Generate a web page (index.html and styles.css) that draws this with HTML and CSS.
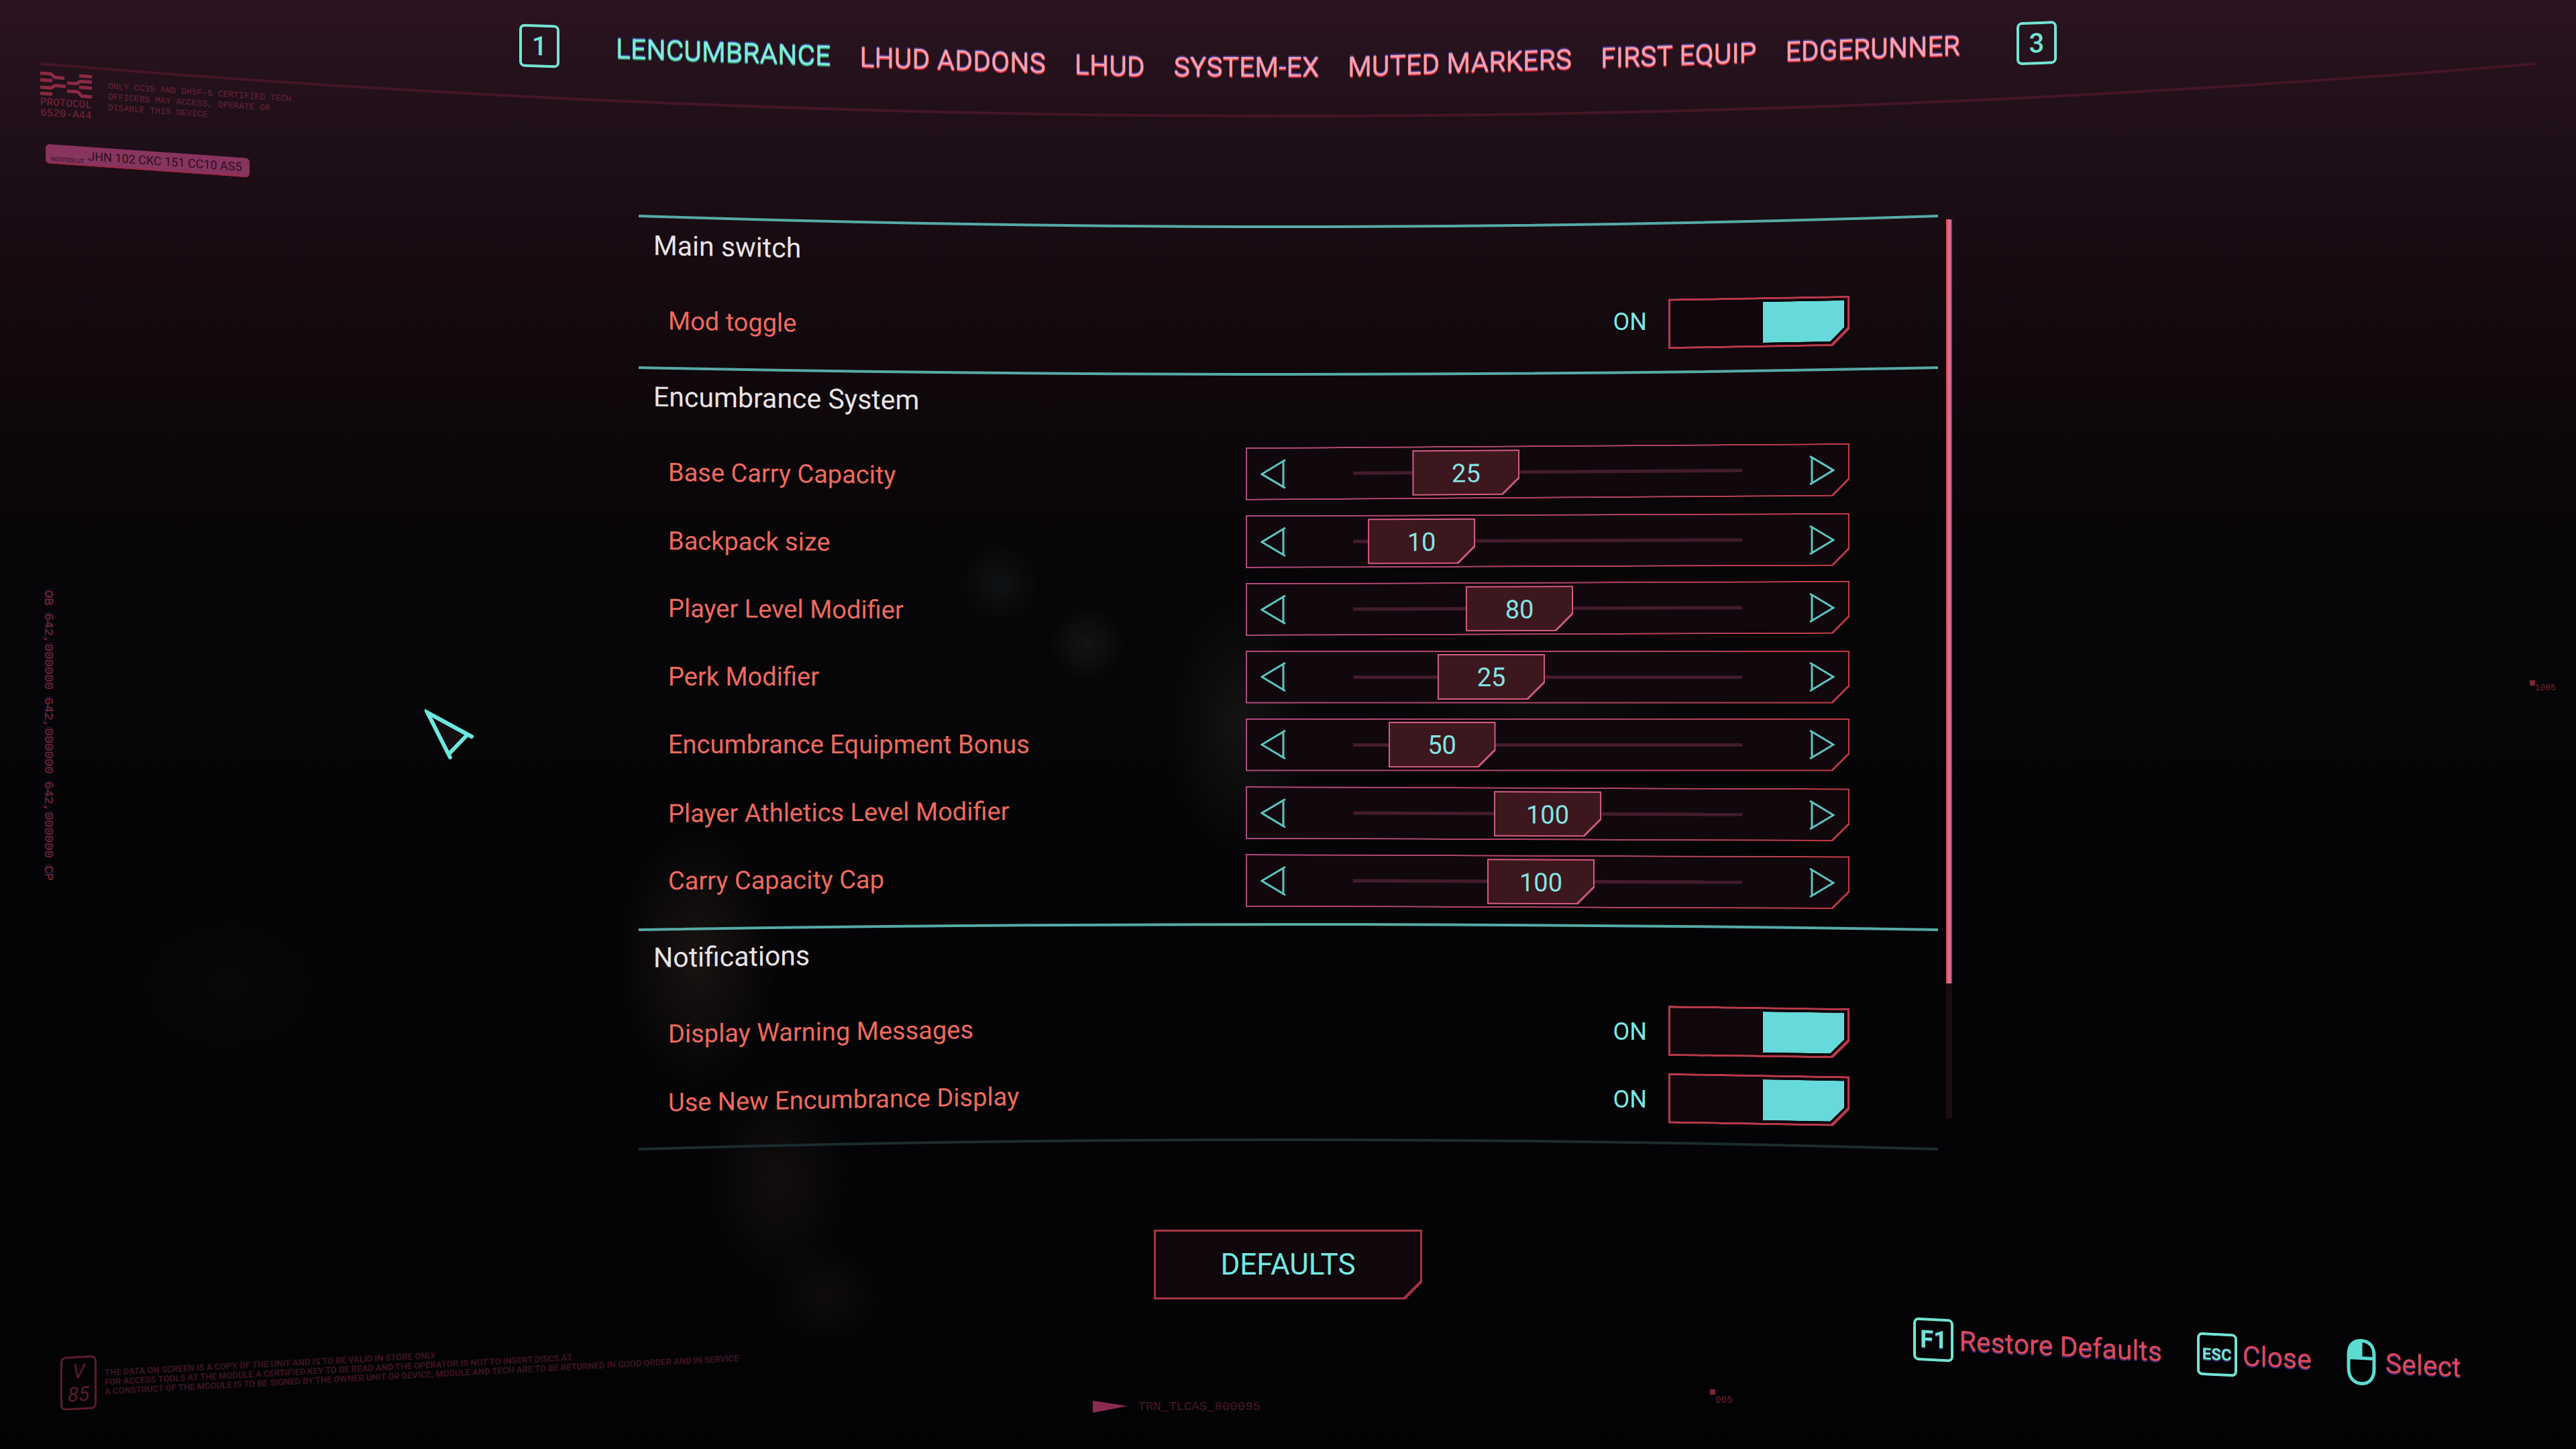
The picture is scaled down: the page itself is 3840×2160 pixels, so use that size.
FILE: index.html
```html
<!DOCTYPE html>
<html lang="en">
<head>
    <meta charset="UTF-8">
    <meta name="viewport" content="width=device-width, initial-scale=1.0">
    <title>Mod Settings</title>
    <link rel="stylesheet" href="styles.css">
</head>
<body>

<svg class="arc" viewBox="0 0 3840 180" preserveAspectRatio="none" aria-hidden="true">
    <path d="M60 95 Q1920 251 3781 95"/>
</svg>

<header class="topbar">
    <div class="protocol">
        <div class="protocol-top">
            <div class="protocol-id">
                <svg class="protocol-logo" viewBox="0 0 77 38" aria-hidden="true">
                    <path d="M0 3h16l6 5h14M58 3h19M0 13h18M40 15h14l6 -4h17M0 24h16l6 -4h16M58 20h19M0 33h18M40 27h16l6 6h15"/>
                </svg>
                <span>PROTOCOL</span>
                <span>6520-A44</span>
            </div>
            <p>ONLY CC35 AND DHSF-5 CERTIFIED TECH<br>OFFICERS MAY ACCESS, OPERATE OR<br>DISABLE THIS DEVICE.</p>
        </div>
        <div class="serial"><small>NOTFSSLUT</small>JHN 102 CKC 151 CC10 AS5</div>
    </div>

    <nav class="tabs">
        <div class="tab-group group-left">
            <kbd class="key">1</kbd>
            <a class="tab active first" href="#">LENCUMBRANCE</a>
            <a class="tab" href="#">LHUD ADDONS</a>
            <a class="tab" href="#">LHUD</a>
        </div>
        <div class="tab-group">
            <a class="tab" href="#">SYSTEM-EX</a>
        </div>
        <div class="tab-group group-right">
            <a class="tab" href="#">MUTED MARKERS</a>
            <a class="tab" href="#">FIRST EQUIP</a>
            <a class="tab last" href="#">EDGERUNNER</a>
            <kbd class="key">3</kbd>
        </div>
    </nav>
</header>

<div class="stage">
    <div class="rail rail-left">OB 642,000000 642,000000 642,000000 CP</div>

    <main>
        <div class="panel">
            <div class="settings">
                <section>
                    <svg class="rule" viewBox="0 0 1936 20" preserveAspectRatio="none" aria-hidden="true"><path d="M0 2Q968 34 1936 2"/></svg>
                    <h2 class="bend-3">Main switch</h2>
                    <div class="row bend-3">
                        <label for="mod-toggle">Mod toggle</label>
                        <div class="switch"><span>ON</span><input type="checkbox" id="mod-toggle" checked></div>
                    </div>
                </section>

                <section>
                    <svg class="rule" viewBox="0 0 1936 20" preserveAspectRatio="none" aria-hidden="true"><path d="M0 2Q968 22 1936 2"/></svg>
                    <h2 class="bend-2">Encumbrance System</h2>
                    <div class="row bend-2">
                        <label for="base-carry">Base Carry Capacity</label>
                        <div class="slider" data-min="5" data-max="100" data-value="25" data-id="base-carry"></div>
                    </div>
                    <div class="row bend-1">
                        <label for="backpack">Backpack size</label>
                        <div class="slider" data-min="5" data-max="100" data-value="10" data-id="backpack"></div>
                    </div>
                    <div class="row bend-1">
                        <label for="player-level">Player Level Modifier</label>
                        <div class="slider" data-min="0" data-max="200" data-value="80" data-id="player-level"></div>
                    </div>
                    <div class="row">
                        <label for="perk">Perk Modifier</label>
                        <div class="slider" data-min="10" data-max="60" data-value="25" data-id="perk"></div>
                    </div>
                    <div class="row">
                        <label for="equipment">Encumbrance Equipment Bonus</label>
                        <div class="slider" data-min="0" data-max="400" data-value="50" data-id="equipment"></div>
                    </div>
                    <div class="row bend-up-1">
                        <label for="athletics">Player Athletics Level Modifier</label>
                        <div class="slider" data-min="0" data-max="200" data-value="100" data-id="athletics"></div>
                    </div>
                    <div class="row bend-up-1">
                        <label for="cap">Carry Capacity Cap</label>
                        <div class="slider" data-min="0" data-max="210" data-value="100" data-id="cap"></div>
                    </div>
                </section>

                <section>
                    <svg class="rule" viewBox="0 0 1936 20" preserveAspectRatio="none" aria-hidden="true"><path d="M0 8Q968 -8 1936 8"/></svg>
                    <h2 class="bend-up-2">Notifications</h2>
                    <div class="row bend-up-2">
                        <label for="warnings">Display Warning Messages</label>
                        <div class="switch"><span>ON</span><input type="checkbox" id="warnings" checked></div>
                    </div>
                    <div class="row bend-up-3">
                        <label for="new-display">Use New Encumbrance Display</label>
                        <div class="switch"><span>ON</span><input type="checkbox" id="new-display" checked></div>
                    </div>
                </section>
                <svg class="rule rule-end" viewBox="0 0 1936 20" preserveAspectRatio="none" aria-hidden="true"><path d="M0 8Q968 -20 1936 8"/></svg>
            </div>
            <div class="scrollbar"><div class="scroll-thumb"></div></div>
        </div>

        <button type="button" class="defaults"><span>DEFAULTS</span></button>
    </main>

    <div class="rail rail-right"><i></i>1065</div>
</div>

<footer>
    <div class="version">
        <div class="version-badge"><span>V</span><span>85</span></div>
        <p>THE DATA ON SCREEN IS A COPY OF THE UNIT AND IS TO BE VALID IN STORE ONLY<br>FOR ACCESS TOOLS AT THE MODULE A CERTIFIED KEY TO BE READ AND THE OPERATOR IS NOT TO INSERT DISCS AT<br>A CONSTRUCT OF THE MODULE IS TO BE SIGNED BY THE OWNER UNIT OR DEVICE, MODULE AND TECH ARE TO BE RETURNED IN GOOD ORDER AND IN SERVICE</p>
    </div>
    <div class="footer-mid">
        <div class="trn"><svg width="52" height="18" viewBox="0 0 52 18" aria-hidden="true"><path d="M0 0L52 8L0 18Z"/></svg>TRN_TLCAS_800095</div>
        <div class="blip"><i></i>065</div>
    </div>
    <div class="hints">
        <div class="hint"><kbd class="key key-medium">F1</kbd>Restore Defaults</div>
        <div class="hint"><kbd class="key key-small">ESC</kbd>Close</div>
        <div class="hint hint-mouse">
            <svg width="44" height="70" viewBox="0 0 44 70" aria-hidden="true">
                <path class="mouse-fill" d="M21 3Q3 4 3 24V29H21Z"/>
                <path d="M22 3C35 3 41 12 41 24V45C41 58 34 67 22 67C10 67 3 58 3 45V24C3 12 9 3 22 3ZM3 29H41M21 3V29"/>
            </svg>
            Select
        </div>
    </div>
</footer>

<svg class="cursor" width="76" height="78" viewBox="0 0 76 78" aria-hidden="true">
    <path class="cursor-fill" d="M4 6L62 39L38 66Z"/>
    <path d="M70 42L4 6L38 73M63 40L38 66"/>
</svg>

<script>
    document.querySelectorAll('.slider').forEach(function (slider) {
        const data = slider.dataset;
        slider.innerHTML = `
            <button type="button" class="arrow" aria-label="Decrease"><svg width="38" height="44" viewBox="0 0 38 44"><path d="M37 1L2 22L37 43M34 3V41"/></svg></button>
            <div class="track">
                <input type="range" id="${data.id}" min="${data.min}" max="${data.max}" value="${data.value}">
                <output for="${data.id}"></output>
            </div>
            <button type="button" class="arrow" aria-label="Increase"><svg width="38" height="44" viewBox="0 0 38 44"><path d="M1 1L36 22L1 43M4 3V41"/></svg></button>`;

        const input = slider.querySelector('input');
        const output = slider.querySelector('output');
        const arrows = slider.querySelectorAll('.arrow');

        function update() {
            output.textContent = input.value;
            output.style.setProperty('--pos', (input.value - input.min) / (input.max - input.min));
        }

        input.addEventListener('input', update);
        arrows[0].addEventListener('click', function () { input.stepDown(); update(); });
        arrows[1].addEventListener('click', function () { input.stepUp(); update(); });
        update();
    });

    document.querySelectorAll('.switch input').forEach(function (box) {
        box.addEventListener('change', function () {
            box.previousElementSibling.textContent = box.checked ? 'ON' : 'OFF';
        });
    });
</script>

</body>
</html>
```

FILE: styles.css
```css
* {
    box-sizing: border-box;
}

body {
    --teal: #68dcdc;
    --red: #ee6a5e;
    --cut: polygon(0 0, 100% 0, 100% calc(100% - 25px), calc(100% - 25px) 100%, 0 100%);
    margin: 0;
    min-height: 100vh;
    display: flex;
    flex-direction: column;
    position: relative;
    overflow: hidden;
    font-family: Roboto, "Liberation Sans", sans-serif;
    font-size: 38px;
    color: var(--red);
    background:
        radial-gradient(circle at 1490px 870px, #101315 0, transparent 60px),
        radial-gradient(circle at 1621px 960px, #161412 0, transparent 60px),
        radial-gradient(ellipse 110px 200px at 1850px 1080px, #141414 0, transparent 100%),
        radial-gradient(ellipse 240px 90px at 2300px 1030px, #100f10 0, transparent 100%),
        radial-gradient(ellipse 120px 200px at 1040px 1430px, #1a1312 0, transparent 100%),
        radial-gradient(ellipse 110px 160px at 1160px 1760px, #130e0e 0, transparent 100%),
        radial-gradient(ellipse 90px 80px at 1230px 1930px, #0f0c0b 0, transparent 100%),
        radial-gradient(ellipse 160px 120px at 340px 1470px, #090708 0, transparent 100%),
        linear-gradient(#2a141f 0, #21101a 160px, #180b12 360px, #10080c 560px, #070507 820px, #040406 1300px, #030305 100%);
}

.arc {
    position: absolute;
    top: 0;
    left: 0;
    width: 100%;
    height: 180px;
}

.arc path {
    fill: none;
    stroke: #451624;
    stroke-width: 4;
}

/* top bar */
.topbar {
    display: grid;
    grid-template-columns: 1fr auto 1fr;
    align-items: start;
    min-height: 320px;
}

.protocol {
    margin: 106px 0 0 60px;
    width: 380px;
    transform: skewY(4deg);
    transform-origin: left top;
    font-family: "Liberation Mono", monospace;
    color: #7a2438;
}

.protocol-top {
    display: flex;
    gap: 24px;
    height: 108px;
}

.protocol-id {
    display: flex;
    flex-direction: column;
    font-size: 16px;
    line-height: 16px;
}

.protocol-logo {
    width: 77px;
    height: 38px;
    fill: none;
    stroke: #8a2a44;
    stroke-width: 5;
}

.protocol p {
    margin: 8px 0 0;
    font-size: 13px;
    line-height: 16px;
    color: #6a2438;
    white-space: nowrap;
}

.serial {
    display: flex;
    align-items: center;
    gap: 6px;
    margin-left: 8px;
    padding: 0 8px;
    width: 304px;
    height: 29px;
    border-radius: 6px;
    border-bottom: 2px solid #a02840;
    background: #87345f;
    color: #2a1020;
    font-family: Roboto, sans-serif;
    font-size: 18px;
    white-space: nowrap;
}

.serial small {
    align-self: flex-end;
    font-size: 9px;
}

.tabs {
    display: flex;
    gap: 43px;
    padding-top: 68px;
}

.tab-group {
    display: flex;
    align-items: center;
    gap: 43px;
    height: 64px;
}

.group-left {
    transform: skewY(2deg);
    transform-origin: right center;
}

.group-right {
    transform: skewY(-2deg);
    transform-origin: left center;
}

.tab {
    font-size: 41px;
    color: #f6a0ae;
    text-decoration: none;
    text-shadow: 0 2px #e0303c, 0 -2px #4a3c90;
}

.tab.active {
    color: #80ecdc;
    text-shadow: 0 2px #3c9c74, 0 -2px #3c50a0;
}

.tab.first {
    margin-left: 41px;
}

.tab.last {
    margin-right: 41px;
}

.key {
    display: flex;
    align-items: center;
    justify-content: center;
    width: 60px;
    height: 64px;
    border: 4px solid #74e4d4;
    border-radius: 8px;
    font-family: Roboto, sans-serif;
    font-size: 40px;
    font-weight: 500;
    color: #74e4d4;
}

.key-medium {
    font-size: 36px;
    font-weight: 700;
}

.key-small {
    font-size: 24px;
    font-weight: 700;
}

/* centre stage */
.stage {
    display: grid;
    grid-template-columns: 1fr minmax(0, 1980px) 1fr;
    align-items: start;
}

.rail {
    font-family: "Liberation Mono", monospace;
    color: #7c2632;
}

.rail-left {
    justify-self: start;
    margin: 560px 0 0 60px;
    writing-mode: vertical-rl;
    font-size: 19px;
    line-height: 24px;
    text-shadow: -3px 0 #1c1838;
}

.rail-right {
    justify-self: end;
    margin: 698px 30px 0 0;
    font-size: 13px;
    line-height: 16px;
    position: relative;
}

.rail-right i,
.blip i {
    position: absolute;
    left: -8px;
    top: -4px;
    width: 8px;
    height: 8px;
    background: #7c2632;
}

main {
    display: flex;
    flex-direction: column;
    align-items: center;
}

.panel {
    display: flex;
    gap: 12px;
    width: 100%;
    padding-left: 22px;
}

.settings {
    flex: 1;
}

section {
    padding-bottom: 26px;
}

.rule {
    display: block;
    width: 100%;
    height: 20px;
    overflow: visible;
    fill: none;
    stroke: #56aaa6;
    stroke-width: 4;
}

.rule-end {
    stroke: #1c2c2e;
}

h2 {
    align-self: start;
    width: fit-content;
    margin: 0 0 44px 22px;
    font-size: 41px;
    line-height: 56px;
    font-weight: 400;
    color: #e8e4e6;
    transform: skewY(var(--bend, 0deg));
}

.row {
    display: flex;
    align-items: center;
    justify-content: space-between;
    height: 80px;
    padding: 0 132px 0 44px;
}

.row + .row {
    margin-top: 21px;
}

.row label {
    transform: skewY(var(--bend, 0deg));
}

/* rows follow the curve of the screen */
.bend-3 { --bend: 1deg; --bend-wide: -0.5deg; }
.bend-2 { --bend: 0.7deg; --bend-wide: -0.4deg; }
.bend-1 { --bend: 0.4deg; --bend-wide: -0.2deg; }
.bend-up-1 { --bend: -0.4deg; --bend-wide: 0.2deg; }
.bend-up-2 { --bend: -0.8deg; --bend-wide: 0.4deg; }
.bend-up-3 { --bend: -1deg; --bend-wide: 0.5deg; }

.switch {
    display: flex;
    align-items: center;
    gap: 32px;
    font-size: 36px;
    color: #7ce8e4;
}

.switch input {
    appearance: none;
    position: relative;
    width: 270px;
    height: 75px;
    margin: 0;
    background: #b83a4a;
    clip-path: var(--cut);
    transform: skewY(calc(var(--bend) * -1));
}

.switch input::before {
    content: "";
    position: absolute;
    inset: 3px;
    background: #0f070b;
    clip-path: var(--cut);
}

.switch input::after {
    content: "";
    position: absolute;
    top: 7px;
    bottom: 7px;
    left: 8px;
    width: 121px;
    background: #4a1c26;
    clip-path: polygon(0 0, 100% 0, 100% calc(100% - 21px), calc(100% - 21px) 100%, 0 100%);
}

.switch input:checked::after {
    left: auto;
    right: 8px;
    background: #66dada;
}

.slider {
    display: flex;
    align-items: center;
    justify-content: space-between;
    position: relative;
    width: 900px;
    height: 79px;
    padding: 0 22px;
    background: linear-gradient(90deg, #b0487c, #b0445c 70%, #c03a44);
    clip-path: var(--cut);
    transform: skewY(var(--bend-wide, 0deg));
    transform-origin: left center;
}

.slider::before {
    content: "";
    position: absolute;
    inset: 2px;
    background: #10080c;
    clip-path: var(--cut);
}

.arrow {
    display: flex;
    position: relative;
    padding: 0;
    border: 0;
    background: none;
}

.arrow svg {
    fill: none;
    stroke: #5cc4c0;
    stroke-width: 3;
}

.track {
    display: flex;
    align-items: center;
    position: relative;
    width: 580px;
    height: 68px;
}

.track input {
    appearance: none;
    width: 100%;
    height: 68px;
    margin: 0;
    background: linear-gradient(#431c2c, #431c2c) center / 100% 5px no-repeat;
}

.track input::-webkit-slider-thumb {
    appearance: none;
    width: 160px;
    height: 68px;
    background: transparent;
}

.track output {
    position: absolute;
    top: 0;
    left: calc(var(--pos) * (100% - 160px));
    width: 160px;
    height: 68px;
    line-height: 70px;
    text-align: center;
    font-size: 38px;
    color: #84e4e4;
    background: #d05c80;
    clip-path: var(--cut);
    pointer-events: none;
    z-index: 0;
}

.track output::before {
    content: "";
    position: absolute;
    inset: 2px;
    background: #3c171e;
    clip-path: var(--cut);
    z-index: -1;
}

.scrollbar {
    width: 9px;
    margin: 7px 0 58px;
    background: #1c0c12;
}

.scroll-thumb {
    height: 85%;
    background: #dc7090;
    border-left: 3px solid #f05048;
    border-right: 2px solid #6a50a0;
}

.defaults {
    position: relative;
    width: 400px;
    height: 104px;
    margin-top: 108px;
    padding: 0;
    border: 0;
    background: #a83444;
    clip-path: var(--cut);
    font-family: inherit;
    font-size: 44px;
    color: #74e8e0;
}

.defaults::before {
    content: "";
    position: absolute;
    inset: 3px;
    background: #0f070b;
    clip-path: var(--cut);
}

.defaults span {
    position: relative;
}

/* footer */
footer {
    display: grid;
    grid-template-columns: 43% 27% 1fr;
    align-items: start;
    padding: 10px 172px 0 90px;
}

.version {
    display: flex;
    gap: 12px;
    margin-top: 76px;
    transform: skewY(-3deg);
    transform-origin: left center;
    color: #5c1c2c;
}

.version-badge {
    display: flex;
    flex-direction: column;
    align-items: center;
    justify-content: center;
    width: 54px;
    height: 80px;
    border: 3px solid #5c1c2c;
    border-radius: 8px;
    font-size: 30px;
    line-height: 34px;
    font-style: italic;
}

.version p {
    margin: 20px 0 0;
    font-size: 13px;
    line-height: 14px;
    font-weight: 700;
    color: #3e1420;
    white-space: nowrap;
}

.footer-mid {
    display: flex;
    justify-content: space-between;
    margin-top: 128px;
    font-family: "Liberation Mono", monospace;
    color: #4a1828;
}

.trn {
    display: flex;
    align-items: center;
    gap: 16px;
    margin-top: 10px;
    font-size: 19px;
    line-height: 24px;
}

.trn svg {
    fill: #8c2c50;
}

.blip {
    position: relative;
    margin-right: 12px;
    font-size: 14px;
    line-height: 24px;
    color: #6c2034;
}

.hints {
    display: flex;
    justify-content: flex-end;
    gap: 52px;
    transform: skewY(3deg);
    transform-origin: left center;
    font-size: 41px;
    color: #e0485a;
}

.hint {
    display: flex;
    align-items: center;
    gap: 8px;
    white-space: nowrap;
    text-shadow: 0 2px #3a2c70;
}

.hint-mouse {
    gap: 14px;
}

.hint svg {
    fill: none;
    stroke: #5cdcd0;
    stroke-width: 5;
}

.hint svg .mouse-fill {
    fill: #5cdcd0;
    stroke: none;
}

.cursor {
    position: absolute;
    left: 633px;
    top: 1056px;
    fill: none;
    stroke: #6ce8e0;
    stroke-width: 6;
    stroke-linecap: round;
}

.cursor .cursor-fill {
    fill: #150c10;
    stroke: none;
}
```
